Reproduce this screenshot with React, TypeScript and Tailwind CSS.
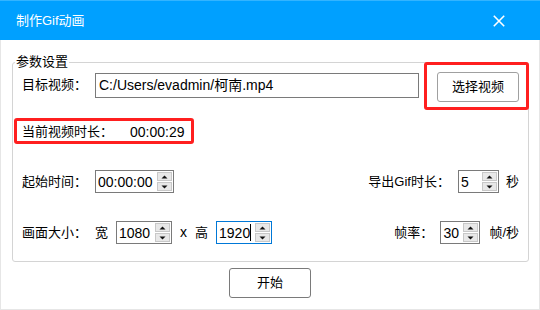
import React from "react";

const FONT = { fontFamily: '"Liberation Sans", "Noto Sans CJK SC", sans-serif' };

function Arrow({ up }: { up: boolean }) {
  return (
    <svg width="7" height="4" viewBox="0 0 7 4">
      {up ? <polygon points="0.5,3.5 3.5,0.5 6.5,3.5" fill="#111" /> : <polygon points="0.5,0.5 3.5,3.5 6.5,0.5" fill="#111" />}
    </svg>
  );
}

function Spin({ value, w, focused, caret }: { value: string; w: string; focused?: boolean; caret?: boolean }) {
  return (
    <div className={`flex h-[23px] bg-white border ${focused ? "border-[#0078d7]" : "border-[#7a7a7a]"} ${w}`}>
      <div className="flex-1 flex items-center pl-[2px] text-[14px] text-black leading-none">
        <span>{value}</span>
        {caret && <span className="w-[1px] h-[17px] bg-black ml-[0px]" />}
      </div>
      <div className="w-[15px] flex flex-col gap-[1px] py-[1px] mr-[1px]">
        <div className="flex-1 bg-[#e8e8e8] border border-[#c8c8c8] flex items-center justify-center">
          <Arrow up />
        </div>
        <div className="flex-1 bg-[#e8e8e8] border border-[#c8c8c8] flex items-center justify-center">
          <Arrow up={false} />
        </div>
      </div>
    </div>
  );
}

export default function App() {
  return (
    <div className="w-[540px] h-[310px] flex flex-col bg-white text-black overflow-hidden" style={FONT}>
      <div className="h-[40px] shrink-0 bg-[#00a0ff] border-t border-[#33b4ff] flex items-center justify-between pl-[16px] pr-[35px]">
        <span className="text-white text-[13px]">制作Gif动画</span>
        <svg width="12" height="12" viewBox="0 0 12 12">
          <path d="M0.8 0.8 L11.2 11.2 M11.2 0.8 L0.8 11.2" stroke="#fff" strokeWidth="1.6" />
        </svg>
      </div>
      <div className="flex-1 flex flex-col border-x border-b border-[#e6e6e6]">
        <div className="relative mt-[22px] ml-[11px] w-[517px] h-[200px] border border-[#d4d4d4] rounded-[3px] pl-[9px] pr-[9px] flex flex-col">
          <span className="absolute -top-[9px] left-[2px] bg-white px-[1px] text-[13px] leading-[16px]">参数设置</span>

          <div className="mt-[9px] h-[30px] flex items-start">
            <div className="w-[73px] h-[25px] flex items-center text-[13px]">目标视频：</div>
            <div className="w-[324px] h-[25px] mt-[1px] border border-[#7a7a7a] flex items-center pl-[3px] text-[14px]">
              C:/Users/evadmin/柯南.mp4
            </div>
            <div className="ml-auto w-[82px] h-[30px] border border-[#a0a0a0] rounded-[3px] bg-white flex items-center justify-center text-[13px]">
              选择视频
            </div>
          </div>

          <div className="mt-[20px] h-[20px] flex items-center">
            <div className="w-[108px] text-[13px]">当前视频时长：</div>
            <div className="text-[14px]">00:00:29</div>
          </div>

          <div className="mt-[28px] h-[23px] flex items-center">
            <div className="w-[73px] text-[13px]">起始时间：</div>
            <Spin value="00:00:00" w="w-[79px]" />
            <div className="ml-auto flex items-center">
              <span className="text-[13px]">导出Gif时长：</span>
              <div className="ml-[8px]">
                <Spin value="5" w="w-[41px]" />
              </div>
              <span className="ml-[7px] text-[13px]">秒</span>
            </div>
          </div>

          <div className="mt-[28px] h-[23px] flex items-center">
            <div className="w-[73px] text-[13px]">画面大小：</div>
            <span className="text-[13px]">宽</span>
            <div className="ml-[8px]">
              <Spin value="1080" w="w-[56px]" />
            </div>
            <span className="ml-[8px] text-[14px]">x</span>
            <span className="ml-[8px] text-[13px]">高</span>
            <div className="ml-[8px]">
              <Spin value="1920" w="w-[56px]" focused caret />
            </div>
            <div className="ml-auto flex items-center">
              <span className="text-[13px]">帧率：</span>
              <div className="ml-[7px]">
                <Spin value="30" w="w-[40px]" />
              </div>
              <span className="ml-[9px] text-[13px]">帧/秒</span>
            </div>
          </div>

          <div className="absolute left-[1px] top-[55px] w-[180px] h-[26px] border-[3px] border-[#ff1f1f] rounded-[3px] pointer-events-none" />
          <div className="absolute left-[411px] -top-[1px] w-[105px] h-[48px] border-[3px] border-[#ff1f1f] rounded-[3px] pointer-events-none" />
        </div>

        <div className="mt-[6px] flex justify-center">
          <div className="w-[82px] h-[30px] border border-[#7a7a7a] rounded-[3px] bg-white flex items-center justify-center text-[13px]">
            开始
          </div>
        </div>
      </div>
    </div>
  );
}
